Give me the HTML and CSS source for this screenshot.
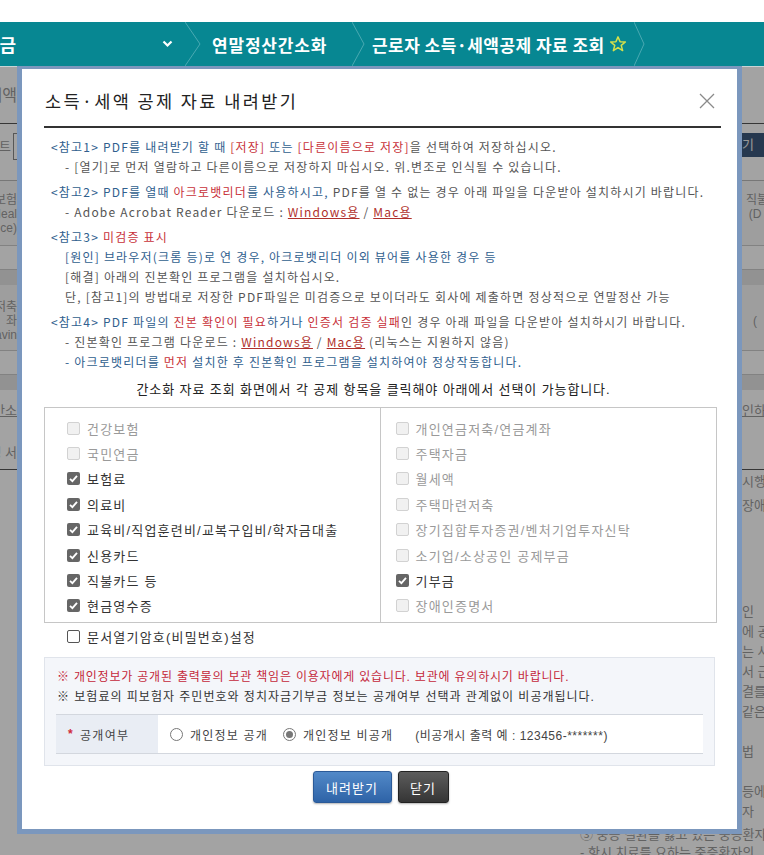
FILE: index.html
```html
<!doctype html>
<html>
<head>
<meta charset="utf-8">
<title>소득·세액 공제 자료 내려받기</title>
<link rel="stylesheet" href="styles.css">
</head>
<body>

<div class="topSpace"></div>

<div class="gnb">
	<div class="gnbFirst">
		<span class="gnbCut">세금</span>
		<svg class="caret" width="11" height="8" viewBox="0 0 11 8"><polyline points="1.5,1.5 5.5,5.5 9.5,1.5" fill="none" stroke="#fff" stroke-width="2.2"/></svg>
	</div>
	<svg class="gnbSep" width="16" height="44" viewBox="0 0 16 44"><polyline points="0,0 15,22 0,44" fill="none" stroke="#4aa9b2" stroke-width="1"/></svg>
	<div class="gnbItem gnbSecond">연말정산간소화</div>
	<svg class="gnbSep" width="16" height="44" viewBox="0 0 16 44"><polyline points="0,0 12,22 0,44" fill="none" stroke="#4aa9b2" stroke-width="1"/></svg>
	<div class="gnbItem gnbThird">
		근로자 소득·세액공제 자료 조회
		<svg class="star" width="18" height="18" viewBox="0 0 24 24"><polygon points="12,2.5 14.8,9 21.8,9.3 16.3,13.8 18.2,20.8 12,16.8 5.8,20.8 7.7,13.8 2.2,9.3 9.2,9" fill="none" stroke="#d6e04a" stroke-width="2" stroke-linejoin="round"/></svg>
	</div>
	<svg class="gnbSep" width="16" height="44" viewBox="0 0 16 44"><polyline points="0,0 10,22 0,44" fill="none" stroke="#4aa9b2" stroke-width="1"/></svg>
</div>

<div class="bgPage">
	<div class="bgRow bgTabs">
		<div class="bl"><span>세액</span></div>
		<div class="br"></div>
	</div>
	<div class="bgRow bgSearch">
		<div class="bl bgField"><span class="bgCut">구분트</span><span class="bgInput"></span></div>
		<div class="br"><span class="bgBtn">받기</span></div>
	</div>
	<div class="bgRow bgGap"></div>
	<div class="bgRow bgHead">
		<div class="bl"><span>보험<br>(Heal<br>ce)</span></div>
		<div class="br bgCenter"><span>직불<br>(D</span></div>
	</div>
	<div class="bgRow bgCell"></div>
	<div class="bgRow bgBand"></div>
	<div class="bgRow bgHead2">
		<div class="bl"><span>저축<br>좌<br>avin</span></div>
		<div class="br bgCenter"><span><br>(</span></div>
	</div>
	<div class="bgRow bgCell"></div>
	<div class="bgRow bgBand"></div>
	<div class="bgRow bgLinks">
		<div class="bl"><span class="bgUnder">간소</span></div>
		<div class="br"><span class="bgUnder">인하</span></div>
	</div>
	<div class="bgRow bgDoc">
		<div class="bl"><span>명 서</span></div>
		<div class="br"></div>
	</div>
	<div class="bgRow bgList">
		<div class="bl"></div>
		<div class="br"><span>시행<br>장애</span></div>
	</div>
	<div class="bgRow bgText">
		<div class="bl"></div>
		<div class="br"><span>인<br>에 공<br>는 사<br>서 근<br>결를사<br>같은<br><br>법<br><br>등에<br>자</span></div>
	</div>
	<div class="bgTail">
		<div>③ 중증 질환을 앓고 있는 중증환자</div>
		<div>- 항시 치료를 요하는 중증환자의</div>
	</div>
</div>

<div class="dim"></div>

<div class="modal">
	<div class="modalHead">
		<h2>소득·세액 공제 자료 내려받기</h2>
		<svg class="close" width="16" height="16" viewBox="0 0 16 16"><path d="M1 1 L15 15 M15 1 L1 15" stroke="#8a8a8a" stroke-width="1.3" fill="none"/></svg>
	</div>

	<div class="notes">
		<div class="noteGroup">
			<div class="blue">&lt;참고1&gt; PDF를 내려받기 할 때 <span class="red">[저장]</span> 또는 <span class="red">[다른이름으로 저장]</span><span class="gray">을 선택하여 저장하십시오.</span></div>
			<div class="sub gray">- [열기]로 먼저 열람하고 다른이름으로 저장하지 마십시오. 위.변조로 인식될 수 있습니다.</div>
		</div>
		<div class="noteGroup">
			<div class="blue">&lt;참고2&gt; PDF를 열때 <span class="red">아크로뱃리더</span>를 사용하시고, <span class="gray">PDF를 열 수 없는 경우 아래 파일을 다운받아 설치하시기 바랍니다.</span></div>
			<div class="sub gray">- Adobe Acrobat Reader 다운로드 : <a class="lnk">Windows용</a> / <a class="lnk">Mac용</a></div>
		</div>
		<div class="noteGroup">
			<div class="blue">&lt;참고3&gt; <span class="red">미검증 표시</span></div>
			<div class="sub blue">[원인] 브라우저(크롬 등)로 연 경우, 아크로뱃리더 이외 뷰어를 사용한 경우 등</div>
			<div class="sub gray">[해결] 아래의 진본확인 프로그램을 설치하십시오.</div>
			<div class="sub gray">단, [참고1]의 방법대로 저장한 PDF파일은 미검증으로 보이더라도 회사에 제출하면 정상적으로 연말정산 가능</div>
		</div>
		<div class="noteGroup">
			<div class="blue">&lt;참고4&gt; PDF 파일의 <span class="red">진본 확인이 필요</span>하거나 <span class="red">인증서 검증 실패</span><span class="gray">인 경우 아래 파일을 다운받아 설치하시기 바랍니다.</span></div>
			<div class="sub gray">- 진본확인 프로그램 다운로드 : <a class="lnk">Windows용</a> / <a class="lnk">Mac용</a> (리눅스는 지원하지 않음)</div>
			<div class="sub blue">- 아크로뱃리더를 <span class="red">먼저</span> 설치한 후 진본확인 프로그램을 설치하여야 정상작동합니다.</div>
		</div>
	</div>

	<p class="guide">간소화 자료 조회 화면에서 각 공제 항목을 클릭해야 아래에서 선택이 가능합니다.</p>

	<div class="items">
		<ul class="itemCol leftCol">
			<li class="off"><span class="cb"></span>건강보험</li>
			<li class="off"><span class="cb"></span>국민연금</li>
			<li><span class="cb on"><svg width="13" height="13" viewBox="0 0 13 13"><polyline points="3,6.8 5.4,9.2 10,3.8" fill="none" stroke="#fff" stroke-width="1.8"/></svg></span>보험료</li>
			<li><span class="cb on"><svg width="13" height="13" viewBox="0 0 13 13"><polyline points="3,6.8 5.4,9.2 10,3.8" fill="none" stroke="#fff" stroke-width="1.8"/></svg></span>의료비</li>
			<li><span class="cb on"><svg width="13" height="13" viewBox="0 0 13 13"><polyline points="3,6.8 5.4,9.2 10,3.8" fill="none" stroke="#fff" stroke-width="1.8"/></svg></span>교육비/직업훈련비/교복구입비/학자금대출</li>
			<li><span class="cb on"><svg width="13" height="13" viewBox="0 0 13 13"><polyline points="3,6.8 5.4,9.2 10,3.8" fill="none" stroke="#fff" stroke-width="1.8"/></svg></span>신용카드</li>
			<li><span class="cb on"><svg width="13" height="13" viewBox="0 0 13 13"><polyline points="3,6.8 5.4,9.2 10,3.8" fill="none" stroke="#fff" stroke-width="1.8"/></svg></span>직불카드 등</li>
			<li><span class="cb on"><svg width="13" height="13" viewBox="0 0 13 13"><polyline points="3,6.8 5.4,9.2 10,3.8" fill="none" stroke="#fff" stroke-width="1.8"/></svg></span>현금영수증</li>
		</ul>
		<ul class="itemCol rightCol">
			<li class="off"><span class="cb"></span>개인연금저축/연금계좌</li>
			<li class="off"><span class="cb"></span>주택자금</li>
			<li class="off"><span class="cb"></span>월세액</li>
			<li class="off"><span class="cb"></span>주택마련저축</li>
			<li class="off"><span class="cb"></span>장기집합투자증권/벤처기업투자신탁</li>
			<li class="off"><span class="cb"></span>소기업/소상공인 공제부금</li>
			<li><span class="cb on"><svg width="13" height="13" viewBox="0 0 13 13"><polyline points="3,6.8 5.4,9.2 10,3.8" fill="none" stroke="#fff" stroke-width="1.8"/></svg></span>기부금</li>
			<li class="off"><span class="cb"></span>장애인증명서</li>
		</ul>
	</div>

	<div class="pwRow"><span class="cb empty"></span>문서열기암호(비밀번호)설정</div>

	<div class="infoBox">
		<p class="warn">※ 개인정보가 공개된 출력물의 보관 책임은 이용자에게 있습니다. 보관에 유의하시기 바랍니다.</p>
		<p>※ 보험료의 피보험자 주민번호와 정치자금기부금 정보는 공개여부 선택과 관계없이 비공개됩니다.</p>
		<div class="openRow">
			<div class="openLabel"><span class="must">*</span>공개여부</div>
			<div class="openField">
				<span class="radio"></span>개인정보 공개
				<span class="radio checked"></span>개인정보 비공개
				<span class="example">(비공개시 출력 예 : 123456-*******)</span>
			</div>
		</div>
	</div>

	<div class="buttons">
		<button class="btnDown">내려받기</button>
		<button class="btnClose">닫기</button>
	</div>
</div>

</body>
</html>
```

FILE: styles.css
```css
* {
	box-sizing: border-box;
}
body {
	margin: 0;
	width: 764px;
	height: 855px;
	overflow: hidden;
	position: relative;
	font-family: "Liberation Sans", "Noto Sans CJK KR", sans-serif;
	font-size: 12px;
	color: #333;
	background-color: #fff;
}
.topSpace {
	height: 22px;
}
.gnb {
	height: 44px;
	display: flex;
	align-items: center;
	background-color: #078792;
	color: #fff;
	font-family: "Noto Sans CJK KR", sans-serif;
	font-weight: bold;
	font-size: 17px;
	letter-spacing: 0.8px;
}
.gnbFirst {
	width: 185px;
	display: flex;
	align-items: center;
	justify-content: space-between;
	padding-right: 12px;
	font-size: 18px;
	letter-spacing: 0;
}
.gnbCut {
	margin-left: -17px;
}
.gnbSep {
	flex-shrink: 0;
}
.gnbItem {
	white-space: nowrap;
	display: flex;
	align-items: center;
}
.gnbSecond {
	margin-left: 11px;
	width: 140px;
}
.gnbThird {
	margin-left: 4px;
	width: 262px;
	letter-spacing: 0.45px;
}
.star {
	margin-left: 4px;
}

/* page behind the dim layer */
.bgPage {
	color: #9a9a9a;
	font-size: 12px;
	line-height: 14px;
}
.bgRow {
	display: flex;
	justify-content: space-between;
}
.bl {
	width: 17px;
	overflow: hidden;
	display: flex;
	justify-content: flex-end;
	white-space: nowrap;
	text-align: right;
}
.bl span {
	flex-shrink: 0;
}
.br {
	width: 22px;
	overflow: hidden;
	white-space: nowrap;
}
.bgCenter {
	text-align: center;
	padding-left: 4px;
}
.bgTabs {
	height: 58px;
	padding-top: 21px;
	font-size: 16px;
	line-height: 18px;
	border-bottom: 1px solid #555;
}
.bgSearch {
	height: 44px;
	padding-top: 9px;
}
.bgField {
	justify-content: flex-start;
	align-items: center;
	gap: 2px;
	height: 27px;
}
.bgCut {
	margin-left: -25px;
	font-size: 13px;
}
.bgInput {
	width: 20px;
	height: 27px;
	border: 1px solid #888;
	background-color: #fff;
	flex-shrink: 0;
}
.bgBtn {
	display: block;
	width: 40px;
	height: 24px;
	margin-left: -12px;
	padding-top: 5px;
	background-color: #3c587c;
	color: #eee;
	font-size: 13px;
}
.bgGap {
	height: 12px;
}
.bgHead {
	height: 66px;
	padding-top: 12px;
	background-color: #f8f8f8;
	border-top: 1px solid #bbb;
	border-bottom: 1px solid #ccc;
}
.bgCell {
	height: 24px;
	border-bottom: 1px solid #ccc;
}
.bgBand {
	height: 15px;
	background-color: #e4e4e4;
}
.bgHead2 {
	height: 66px;
	padding-top: 15px;
	background-color: #f8f8f8;
	border-bottom: 1px solid #ccc;
}
.bgLinks {
	height: 40px;
	padding-top: 14px;
	font-size: 13px;
}
.bgUnder {
	text-decoration: underline;
}
.bgDoc {
	height: 40px;
	padding-top: 16px;
	font-size: 13px;
	border-bottom: 1px solid #555;
}
.bgList {
	height: 132px;
	line-height: 24px;
	font-size: 13px;
}
.bgText {
	height: 224px;
	line-height: 20px;
	font-size: 13px;
}
.bgTail {
	padding-left: 580px;
	line-height: 18px;
	font-size: 13px;
	white-space: nowrap;
}
.dim {
	position: absolute;
	top: 66px;
	left: 0;
	right: 0;
	bottom: 0;
	background-color: rgba(0, 0, 0, 0.36);
	border-top: 1px solid #c9d4d6;
}

/* modal */
.modal {
	position: absolute;
	top: 66px;
	left: 17px;
	width: 725px;
	border: 5px solid #7b97bd;
	border-top-width: 3px;
	background-color: #fff;
	padding: 0 20px 26px 22px;
}
.modalHead {
	display: flex;
	align-items: center;
	justify-content: space-between;
	margin-right: -4px;
	padding: 20px 6px 13px 1px;
	border-bottom: 2px solid #333;
}
.modalHead h2 {
	margin: 0;
	font-family: "Noto Sans CJK KR", sans-serif;
	font-weight: normal;
	font-size: 17.5px;
	line-height: 24px;
	letter-spacing: 2.4px;
	color: #222;
}
.notes {
	padding: 9px 0 0 7px;
	font-family: "Noto Sans CJK KR", sans-serif;
	line-height: 20px;
	letter-spacing: 1.2px;
	white-space: nowrap;
}
.noteGroup {
	margin-bottom: 5px;
}
.noteGroup:last-child {
	margin-bottom: 0;
}
.sub {
	padding-left: 14px;
}
.blue {
	color: #30608e;
}
.red {
	color: #c8323a;
}
.gray {
	color: #555;
}
.lnk {
	color: #b0302c;
	text-decoration: underline;
}
.guide {
	margin: 8px 0 7px;
	text-align: center;
	line-height: 20px;
	font-size: 13px;
	letter-spacing: 0.9px;
	color: #222;
	padding-right: 14px;
}
.items {
	display: flex;
	height: 216px;
	border: 1px solid #c6c6c6;
}
.itemCol {
	list-style: none;
	margin: 0;
	padding: 7.5px 0 0;
	width: 50%;
}
.leftCol {
	padding-left: 22px;
	border-right: 1px solid #c6c6c6;
}
.rightCol {
	padding-left: 15px;
}
.itemCol li {
	height: 25.4px;
	display: flex;
	align-items: center;
	font-size: 13px;
	color: #333;
	letter-spacing: 1.2px;
}
.itemCol li.off {
	color: #9a9a9a;
}
.cb {
	width: 13px;
	height: 13px;
	border: 1px solid #d2d2d2;
	background-color: #f1f1f1;
	border-radius: 2px;
	margin-right: 7px;
	flex-shrink: 0;
}
.cb.on {
	border: none;
	background-color: #666;
}
.cb svg {
	display: block;
}
.cb.empty {
	border: 1px solid #555;
	background-color: #fff;
}
.pwRow {
	display: flex;
	align-items: center;
	height: 20px;
	margin-top: 3px;
	padding-left: 23px;
	font-size: 13px;
	letter-spacing: 1.2px;
}
.infoBox {
	margin: 11px 2px 0 0;
	padding: 9px 11px 11px;
	background-color: #f4f6fa;
	border: 1px solid #e0e4eb;
}
.infoBox p {
	margin: 0;
	padding-left: 1px;
	line-height: 20px;
	color: #333;
	letter-spacing: 1px;
	white-space: nowrap;
}
.infoBox p.warn {
	color: #c4283a;
	letter-spacing: 0.8px;
}
.openRow {
	display: flex;
	height: 40px;
	margin-top: 7px;
	border-top: 1px solid #d3d7de;
	border-bottom: 1px solid #d3d7de;
	background-color: #fff;
}
.openLabel {
	width: 102px;
	display: flex;
	align-items: center;
	padding-left: 12px;
	background-color: #e9edf4;
	color: #444;
	letter-spacing: 1.3px;
}
.must {
	color: #d0293a;
	font-weight: bold;
	margin-right: 6px;
}
.openField {
	display: flex;
	align-items: center;
	padding-left: 12px;
	color: #444;
	letter-spacing: 1.2px;
	white-space: nowrap;
}
.radio {
	width: 13px;
	height: 13px;
	border: 1px solid #777;
	border-radius: 50%;
	margin-right: 7px;
	background-color: #fff;
	display: flex;
	align-items: center;
	justify-content: center;
}
.radio.checked {
	margin-left: 15px;
}
.radio.checked::after {
	content: "";
	width: 7px;
	height: 7px;
	border-radius: 50%;
	background-color: #777;
}
.example {
	margin-left: 22px;
	letter-spacing: 0.5px;
}
.buttons {
	display: flex;
	justify-content: center;
	gap: 6px;
	margin-top: 5px;
}
.buttons button {
	height: 32px;
	border-radius: 3px;
	font-family: "Noto Sans CJK KR", sans-serif;
	font-size: 13px;
	letter-spacing: 1px;
	color: #fff;
	padding: 0;
	box-shadow: 0 1px 2px rgba(0, 0, 0, 0.3);
}
.btnDown {
	width: 79px;
	border: 1px solid #2b5a98;
	background: linear-gradient(#5289c8, #2e63a7);
}
.btnClose {
	width: 51px;
	border: 1px solid #222;
	background: linear-gradient(#5c5c5c, #353535);
}
```
